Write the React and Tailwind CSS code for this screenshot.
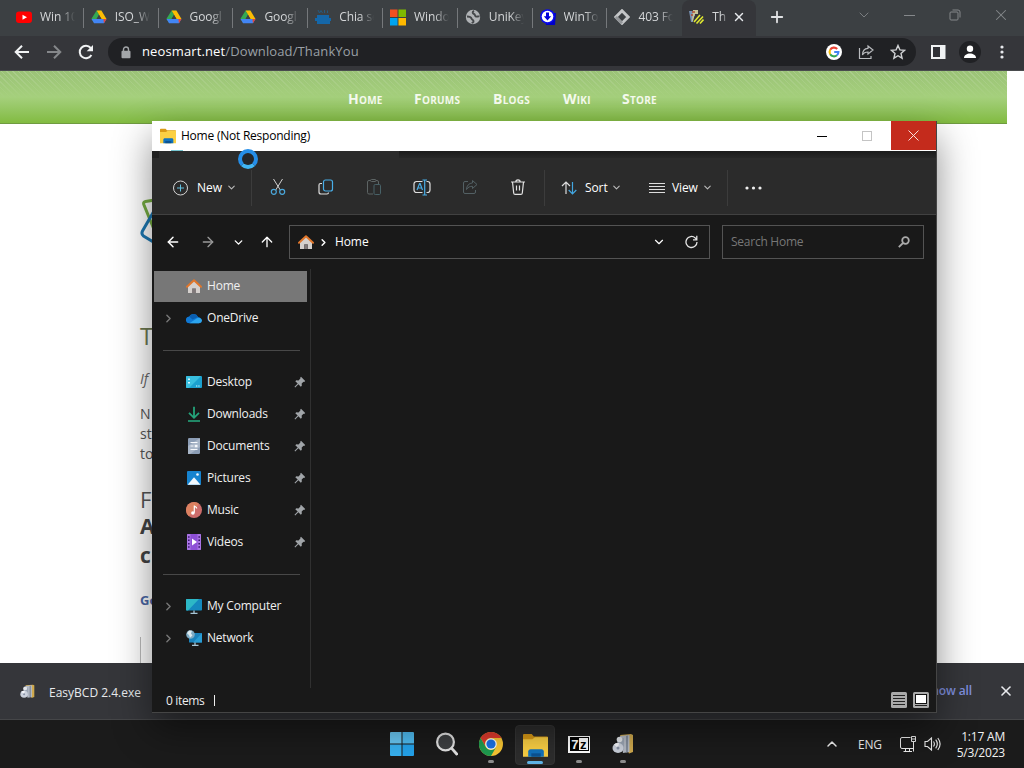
import { ArrowLeft, ArrowRight, ArrowUp, ChevronDown, ChevronRight, ChevronUp, Plus, X } from 'lucide-react'

function DriveIcon() {
  return (
    <svg width="16" height="16" viewBox="0 0 16 16">
      <path d="M5.6 1.5h4.8L8 5.7z" fill="#188038" />
      <path d="M5.6 1.5 8 5.7 3.2 14 .5 9.8z" fill="#34a853" />
      <path d="M5.6 1.5h4.8l5.1 8.5h-5z" fill="#fbbc04" />
      <path d="M.5 10h15l-2.6 4.3H3.1z" fill="#4285f4" />
      <path d="M12.5 10h3l-2.6 4.3z" fill="#ea4335" />
      <path d="M8 6 5.6 10h4.8z" fill="#3c4043" />
    </svg>
  )
}

function YoutubeIcon() {
  return (
    <svg width="16" height="16" viewBox="0 0 16 16">
      <rect y="2.5" width="16" height="11.5" rx="3" fill="#f00" />
      <path d="M6.5 5.8v5L11 8.3z" fill="#fff" />
    </svg>
  )
}

function BlueSiteIcon() {
  return (
    <svg width="16" height="16" viewBox="0 0 16 16">
      <path d="M3 1 4.5 4 6 1.500l1.500 2.500M9.5 1v3M12.500 1.500v2.500" stroke="#255b80" strokeWidth="1" fill="none" />
      <path d="M2 6h12v3h2v3h-1v3H2v-3H0V9h2z" fill="#1567a8" />
    </svg>
  )
}

function MicrosoftIcon() {
  return (
    <svg width="17" height="17" viewBox="0 0 17 17">
      <path d="M0 0h8v8H0z" fill="#f25022" />
      <path d="M9 0h8v8H9z" fill="#7fba00" />
      <path d="M0 9h8v8H0z" fill="#00a4ef" />
      <path d="M9 9h8v8H9z" fill="#ffb900" />
    </svg>
  )
}

function GlobeIcon() {
  return (
    <svg width="16" height="16" viewBox="0 0 16 16">
      <circle cx="8" cy="8" r="7.2" fill="#b0b3b6" />
      <path d="M2 7.500c2 0 4 .5 4.500 2s1.500 1 2 2.500-1 1.500-1.500 2.200" stroke="#44474a" strokeWidth="1.900" fill="none" />
      <path d="M9 1.800C7 3 7.500 4.500 9 5s.5 2 2 2.500 2-.5 3.500 0" stroke="#44474a" strokeWidth="1.900" fill="none" />
    </svg>
  )
}

function DownloadSiteIcon() {
  return (
    <svg width="16" height="16" viewBox="0 0 16 16">
      <path d="M4 4h12l-1 12H6z" fill="#0000c8" />
      <circle cx="7.5" cy="7.5" r="7.3" fill="#0a0af0" />
      <circle cx="7.5" cy="7.5" r="5.8" fill="#fff" />
      <path d="M6 3.5h3v3.8h2.2L7.5 11.5 3.8 7.3H6z" fill="#0000d8" />
    </svg>
  )
}

function DiamondIcon() {
  return (
    <svg width="16" height="16" viewBox="0 0 16 16">
      <path d="M8 1.8 14.2 8 8 14.2 1.8 8z" fill="none" stroke="#c4c6c8" strokeWidth="3" />
      <path d="M8 14.2 1.8 8" stroke="#929598" strokeWidth="3" />
    </svg>
  )
}

function EasyTabIcon() {
  return (
    <svg width="16" height="16" viewBox="0 0 16 16">
      <path d="M1 2h6v5H5v6H3z" fill="#7892b4" />
      <path d="M5 1h5v4H7l-2 7H4z" fill="#c6c49a" />
      <path d="m6 13 6-7M8.500 14.500 15 7.500M12 14.500l3.500-4" stroke="#dfe830" strokeWidth="1.600" />
      <path d="M4 3h3M3 6h2" stroke="#b04b30" strokeWidth="1.5" />
    </svg>
  )
}

function GoogleIcon() {
  return (
    <svg width="16" height="16" viewBox="0 0 16 16">
      <circle cx="8" cy="8" r="8" fill="#fff" />
      <g fill="none" strokeWidth="2.1">
        <path d="M11.2 5A4.4 4.4 0 0 0 4.2 5.8" stroke="#ea4335" />
        <path d="M4.2 5.8a4.4 4.4 0 0 0 0 4.4" stroke="#fbbc04" />
        <path d="M4.2 10.2a4.4 4.4 0 0 0 6.7 1.1" stroke="#34a853" />
        <path d="M10.9 11.3A4.4 4.4 0 0 0 12.4 8H8.2" stroke="#4285f4" />
      </g>
    </svg>
  )
}

function FolderIcon({ size }) {
  return (
    <svg width={size} height={size} viewBox="0 0 24 24">
      <path d="M0 2.2C0 1.5.5 1 1.2 1h7.2l2 2.3h12.4c.7 0 1.2.5 1.2 1.2V8H0z" fill="#d99a16" />
      <path d="M0 6h9l2.5-2H24v18.8H0z" fill="#fbd044" />
      <path d="M5 22.8v-5c0-1.4.9-2.3 2.3-2.3h10.4c1.4 0 2.3.9 2.3 2.3v5z" fill="#1173be" />
      <path d="M8 19.5h9v3.3H8z" fill="#0b5393" />
    </svg>
  )
}

function HomeIcon() {
  return (
    <svg width="16" height="16" viewBox="0 0 16 16">
      <path d="M2 7.5 8 2l6 5.5V15H9.8v-4.5H6.2V15H2z" fill="#d5d0cd" />
      <path d="M6.2 10.5h3.6V15H6.2z" fill="#80797a" />
      <path d="M1 8.7 8 2.2l7 6.5" fill="none" stroke="#e0762b" strokeWidth="2" strokeLinejoin="round" strokeLinecap="round" />
    </svg>
  )
}

function OneDriveIcon() {
  return (
    <svg width="16" height="16" viewBox="0 0 16 16">
      <path d="M3.5 13.3a3.4 3.4 0 0 1-.4-6.8A5 5 0 0 1 12 6.9a3.3 3.3 0 0 1 .8 6.4z" fill="#0f78d4" />
      <path d="M3.1 6.5A5 5 0 0 1 12 6.9L6.5 9.6z" fill="#0a5eb0" />
      <path d="M3.5 13.3 11 8.2c2.5-1.5 5 .3 5 2.4 0 1.5-1.3 2.7-3.2 2.7z" fill="#2ba4ee" />
    </svg>
  )
}

function DesktopIcon() {
  return (
    <svg width="16" height="16" viewBox="0 0 16 16">
      <rect y="2" width="16" height="12" rx="1" fill="#1ba0cf" />
      <path d="M0 3a1 1 0 0 1 1-1h14L3 14H1a1 1 0 0 1-1-1z" fill="#38bfdf" />
      <path d="M2 4.5h2v1.5H2zM2 8h2v1.5H2z" fill="#d6f6ff" />
      <path d="M10 12h1.3M12.3 12h1.3" stroke="#d6f6ff" />
    </svg>
  )
}

function DownloadsIcon() {
  return (
    <svg width="16" height="16" viewBox="0 0 16 16">
      <path d="M8 .8v10.5M3 6.8l5 5 5-5" fill="none" stroke="#24a37a" strokeWidth="1.8" />
      <path d="M2 15h12" stroke="#24a37a" strokeWidth="1.6" />
    </svg>
  )
}

function DocumentsIcon() {
  return (
    <svg width="16" height="16" viewBox="0 0 16 16">
      <rect x="2" width="12" height="16" rx="1.2" fill="#8c9db5" />
      <path d="M2 8 14 0v9L4 16H2z" fill="#a8b5c7" />
      <path d="M4.5 4.5h7M4.5 11.5h7M4.5 8h3" stroke="#f6f8fc" strokeWidth="1.2" />
      <path d="M8.7 6.8h2.8v2.5H8.7z" fill="#f6f8fc" />
    </svg>
  )
}

function PicturesIcon() {
  return (
    <svg width="16" height="16" viewBox="0 0 16 16">
      <rect x="1" y="1" width="14" height="14" rx="1" fill="#1683cf" />
      <path d="m1.6 14.8 6-7a.6.6 0 0 1 .9 0l6 7z" fill="#f2f8fc" />
      <circle cx="11.5" cy="4.5" r="1.3" fill="#f2f8fc" />
    </svg>
  )
}

function MusicIcon() {
  return (
    <svg width="16" height="16" viewBox="0 0 16 16">
      <circle cx="8" cy="8" r="8" fill="#cc6c6b" />
      <path d="M.5 5.5A8 8 0 0 1 13 1.8L3 14.2a8 8 0 0 1-2.5-8.7z" fill="#dc8160" />
      <path d="M8.3 10.8V3.6c.4 1.4 2.4 1.2 2.4 3" fill="none" stroke="#fff" strokeWidth="1.2" />
      <circle cx="6.9" cy="11" r="1.8" fill="#fff" />
    </svg>
  )
}

function VideosIcon() {
  return (
    <svg width="16" height="16" viewBox="0 0 16 16">
      <rect x="1" width="14" height="16" rx="1" fill="#8d4fd6" />
      <path d="M1 1a1 1 0 0 1 1-1h2.5v16H2a1 1 0 0 1-1-1zM11.5 0H14a1 1 0 0 1 1 1v14a1 1 0 0 1-1 1h-2.5z" fill="#a974e4" />
      <path d="M2 3h1.6M2 6.3h1.6M2 9.7h1.6M2 13h1.6M12.4 3H14M12.4 6.3H14M12.4 9.7H14M12.4 13H14" stroke="#3d1770" strokeWidth="1.6" />
      <path d="M6 4.5v7l5-3.5z" fill="#fff" />
    </svg>
  )
}

function ComputerIcon() {
  return (
    <svg width="16" height="16" viewBox="0 0 16 16">
      <rect y="1" width="16" height="11.5" rx=".8" fill="#1589be" />
      <path d="M0 1.8A.8.8 0 0 1 .8 1H13L2 12.5H.8a.8.8 0 0 1-.8-.8z" fill="#2db8c6" />
      <path d="M8 12.5v2.5M4.5 15.3h7" stroke="#a6c5d6" strokeWidth="1.3" />
    </svg>
  )
}

function NetworkIcon() {
  return (
    <svg width="16" height="16" viewBox="0 0 16 16">
      <rect x="3" y="3" width="13" height="9.5" rx=".6" fill="#1b82bb" />
      <path d="M16 3 7 12.5h8.4a.6.6 0 0 0 .6-.6z" fill="#2a9dd4" />
      <path d="M9 12.5V15M6 15.3h6.5" stroke="#a6c5d6" strokeWidth="1.3" />
      <circle cx="4.5" cy="4.5" r="4.3" fill="#7eabc4" />
      <path d="M1 3.2 3 .6l3 .2L5 3.4l1.4 2L4 7.8 3 5z" fill="#dceaf0" />
    </svg>
  )
}

function PinIcon() {
  return (
    <svg width="12" height="12" viewBox="0 0 12 12">
      <path d="m7 .8 4.2 4.2-1 .9-.7-.1-1.8 1.8.1 2.1-1 1L4.4 8.3 1.2 11.5l-.7-.7 3.2-3.2-2.4-2.4 1-1 2.2.2 1.9-1.9-.2-.7z" fill="#a1a5a9" />
    </svg>
  )
}

// installer icon: box with a disc leaning on it
function SetupIcon({ size }) {
  return (
    <svg width={size} height={size} viewBox="0 0 22 22">
      <path d="M8 2 19 1l2 1v17l-4 1.500z" fill="#d0aa4e" />
      <path d="M8 3 17.500 2v17L11 20z" fill="#b4bac4" />
      <path d="m14 3 2-.5V19l-2 .5z" fill="#858f9e" />
      <path d="M5 7 12 5v12l-5 1z" fill="#9ba5b4" />
      <ellipse cx="6" cy="15" rx="5.500" ry="5" fill="#ccd2dd" />
      <path d="M6 15 2 11.500a5.500 5.500 0 0 1 5-1.500z" fill="#f5f7fb" />
      <circle cx="6" cy="15" r="1.500" fill="#8892a6" />
      <circle cx="7.500" cy="6.500" r="2.800" fill="#e3e6ea" />
    </svg>
  )
}

function ChromeIcon() {
  return (
    <svg width="24" height="24" viewBox="0 0 24 24">
      <circle cx="12" cy="12" r="12" fill="#fcc934" />
      <path d="M1.6 6A12 12 0 0 1 22.4 6H12a6 6 0 0 0-5.2 9z" fill="#e33b2e" />
      <path d="M1.6 6A12 12 0 0 0 12 24l5.2-9a6 6 0 0 1-10.4 0z" fill="#1f9d51" />
      <circle cx="12" cy="12" r="5.8" fill="#fff" />
      <circle cx="12" cy="12" r="4.6" fill="#1a73e8" />
    </svg>
  )
}

const tabs = [
  { title: 'Win 10', icon: <YoutubeIcon /> },
  { title: 'ISO_W', icon: <DriveIcon /> },
  { title: 'Googl', icon: <DriveIcon /> },
  { title: 'Googl', icon: <DriveIcon /> },
  { title: 'Chia sẻ', icon: <BlueSiteIcon /> },
  { title: 'Windo', icon: <MicrosoftIcon /> },
  { title: 'UniKey', icon: <GlobeIcon /> },
  { title: 'WinTo', icon: <DownloadSiteIcon /> },
  { title: '403 Fo', icon: <DiamondIcon /> },
]

const sidebar = [
  { name: 'Home', icon: <HomeIcon />, active: true },
  { name: 'OneDrive', icon: <OneDriveIcon />, expandable: true },
  { divider: true },
  { name: 'Desktop', icon: <DesktopIcon />, pinned: true },
  { name: 'Downloads', icon: <DownloadsIcon />, pinned: true },
  { name: 'Documents', icon: <DocumentsIcon />, pinned: true },
  { name: 'Pictures', icon: <PicturesIcon />, pinned: true },
  { name: 'Music', icon: <MusicIcon />, pinned: true },
  { name: 'Videos', icon: <VideosIcon />, pinned: true },
  { divider: true },
  { name: 'My Computer', icon: <ComputerIcon />, expandable: true },
  { name: 'Network', icon: <NetworkIcon />, expandable: true },
]

function TabStrip() {
  return (
    <div className="h-[36px] bg-[#3c4043] flex pl-[9px] text-[#d4d6d8] text-[12px]">
      {tabs.map((tab, i) => (
        <div key={i} className="w-[74.8px] shrink-0 h-[34px] flex items-center relative pl-[7px]">
          <div className="w-4 h-4 flex items-center justify-center shrink-0">{tab.icon}</div>
          <div className="ml-[8px] w-[38px] overflow-hidden whitespace-nowrap tracking-[-0.1px] [mask-image:linear-gradient(to_right,#000_55%,transparent_92%)]">
            {tab.title}
          </div>
          {i < 8 && <div className="absolute right-0 top-[8px] w-px h-[20px] bg-[#75787b]" />}
        </div>
      ))}
      <div className="w-[74px] h-[36px] bg-[#35363a] rounded-t-lg flex items-center pl-[6px] pb-[2px]">
        <EasyTabIcon />
        <div className="ml-[8px] w-[16px] overflow-hidden whitespace-nowrap [mask-image:linear-gradient(to_right,#000_60%,transparent)]">Th</div>
        <X className="ml-[4px] text-[#e8eaed]" size={14} strokeWidth={2.4} />
      </div>
      <Plus className="mt-[8px] ml-[12px] text-[#e0e2e4]" size={18} strokeWidth={2.4} />
      <div className="ml-auto flex items-center h-[29px] pr-[14px] gap-[30px] text-[#85888b]">
        <ChevronDown size={16} strokeWidth={1.3} />
        <svg width="14" height="14" viewBox="0 0 14 14"><path d="M2 7.5h11" stroke="currentColor" /></svg>
        <svg className="ml-[3px]" width="12" height="12" viewBox="0 0 12 12" fill="none" stroke="currentColor">
          <rect x="1" y="3" width="8" height="8" rx="1" />
          <path d="M3.5 1H9a2 2 0 0 1 2 2v5.5" />
        </svg>
        <X className="ml-[1px]" size={18} strokeWidth={1.4} />
      </div>
    </div>
  )
}

function AddressBar() {
  return (
    <div className="h-[35px] bg-[#35363a] border-b border-[#4a4c4e] flex items-center pl-[14px] pb-[2px] text-[#e8eaed]">
      <svg width="16" height="16" viewBox="0 0 16 16" fill="none" stroke="#f1f3f4" strokeWidth="2"><path d="M15 8H2M8 1.7 1.7 8 8 14.3" /></svg>
      <svg className="ml-4" width="16" height="16" viewBox="0 0 16 16" fill="none" stroke="#85878a" strokeWidth="2"><path d="M1 8h13M8 1.7 14.3 8 8 14.3" /></svg>
      <svg className="ml-4" width="16" height="16" viewBox="0 0 16 16">
        <path d="M13.4 11A6.2 6.2 0 1 1 12.7 4" fill="none" stroke="#f1f3f4" strokeWidth="2" />
        <path d="M15 1v6.3H8.7z" fill="#f1f3f4" />
      </svg>
      <div className="ml-[14px] w-[808px] h-[28px] rounded-full bg-[#202124] flex items-center pl-[13px] pr-[10px] text-[13px]">
        <svg width="10" height="13" viewBox="0 0 10 13">
          <path d="M2.5 6V3.5a2.5 2.5 0 0 1 5 0V6" fill="none" stroke="#a3a6a9" strokeWidth="1.4" />
          <rect x=".5" y="4.8" width="9" height="7.5" rx="1" fill="#a3a6a9" />
        </svg>
        <span className="ml-[11px] whitespace-nowrap text-[#9aa0a6] tracking-[0.12px]"><span className="text-white font-medium">neosmart.net</span>/Download/ThankYou</span>
        <div className="ml-auto flex items-center gap-4">
          <GoogleIcon />
          <svg width="16" height="16" viewBox="0 0 16 16" fill="none" stroke="#b9bbbe" strokeWidth="1.2">
            <path d="M1.5 4v10.500H13V12" />
            <path d="M10 2 15 6l-5 4V8C7.5 8 5.500 9 4.500 11c0-4 2-6.500 5.500-6.700z" />
          </svg>
          <svg width="16" height="16" viewBox="0 0 16 16" fill="none" stroke="#d0d2d4" strokeWidth="1.4">
            <path d="m8 1.5 1.9 4.400 4.700.4-3.600 3.200 1.100 4.700L8 11.700l-4.100 2.500L5 9.500 1.400 6.300l4.700-.4z" />
          </svg>
        </div>
      </div>
      <svg className="ml-[15px]" width="15" height="14" viewBox="0 0 15 14"><path d="M0 0h14.500v14H0z" fill="#f1f3f4" /><path d="M2 2h7v10H2z" fill="#303136" /></svg>
      <svg className="ml-[12px]" width="24" height="24" viewBox="0 0 24 24">
        <circle cx="12" cy="12" r="11" fill="#202124" />
        <circle cx="12" cy="8.8" r="3.2" fill="#fff" />
        <path d="M6 18c0-3 3-4.500 6-4.500s6 1.500 6 4.500z" fill="#fff" />
      </svg>
      <svg className="ml-[18px]" width="4" height="14" viewBox="0 0 4 14" fill="#e8eaed"><circle cx="2" cy="2" r="1.6" /><circle cx="2" cy="7" r="1.6" /><circle cx="2" cy="12" r="1.6" /></svg>
    </div>
  )
}

function WebPage() {
  return (
    <div className="h-[592px] bg-white relative overflow-hidden">
      <div className="w-[1007px] h-[53px] border-b border-[#6f9b40] bg-linear-to-b from-[#9bc377] via-[#a5d07c] to-[#82bb40] relative">
        <div className="absolute inset-x-0 top-0 h-[28px] bg-[repeating-linear-gradient(45deg,rgba(255,255,255,0.16)_0px,rgba(255,255,255,0.16)_1px,transparent_1px,transparent_4px)] [mask-image:linear-gradient(to_bottom,#000,transparent)]" />
        <nav className="relative flex gap-[31px] pl-[348px] pt-[18px] text-[14px] leading-[20px] font-bold text-[#f6fbef] [font-variant:small-caps] tracking-[0.25px]">
          <a className="w-[35px]">Home</a>
          <a className="w-[48px]">Forums</a>
          <a className="w-[39px]">Blogs</a>
          <a className="w-[28px]">Wiki</a>
          <a className="w-[38px]">Store</a>
        </nav>
      </div>
      <div className="pl-[140px] text-[#555] text-[14px] leading-[20px]">
        <svg className="mt-[74px] block" width="24" height="50" viewBox="0 0 24 50" fill="none" strokeWidth="3">
          <path d="M24 21 15 2 5.5 3.500q-2.500.7-1.700 3L20 46" stroke="#76ad43" />
          <path d="M14 13 2.500 33q-1.500 3 1 5L20 48" stroke="#1c78b3" />
        </svg>
        <h1 className="mt-[70px] text-[24px] leading-[36px] text-[#6c7850]">T</h1>
        <p className="mt-[15px] italic text-[#666]">If</p>
        <p className="mt-[15px]">N<br />st<br />to</p>
        <h2 className="mt-[20px] text-[22px] leading-[30px]">F</h2>
        <div className="-mt-[2px] text-[21px] leading-[29px] font-bold text-[#444]">A<br />c</div>
        <p className="mt-[20px] font-bold text-[#4b67a6] text-[13px]">Go</p>
        <div className="mt-[27px] w-10 h-[40px] border-l border-[#bbb]" />
      </div>
    </div>
  )
}

function DownloadShelf() {
  return (
    <div className="h-[57px] bg-[#35363a] border-b border-[#454648] flex items-center pl-[20px] text-[#e8eaed]">
      <SetupIcon size={15} />
      <span className="ml-[14px] mt-[3px] text-[12px] whitespace-nowrap w-[120px]">EasyBCD 2.4.exe</span>
      <span className="ml-auto text-[12px] font-semibold text-[#7f8fdf] tracking-[-0.1px]">Show all</span>
      <X className="ml-[26px] mr-[10px]" size={16} strokeWidth={2.4} />
    </div>
  )
}

function Ribbon() {
  return (
    <div className="h-[64px] bg-[#2b2b2b] border-b border-[#414141]">
      <div className="flex justify-between h-[7px]">
        <div className="w-[7px] bg-[#202020]" />
        <div className="w-[537px] bg-linear-to-b from-[#1b1b1b] to-[#272727]" />
      </div>
      <div className="h-[59px] flex items-center text-white text-[12px] font-medium [&_svg]:shrink-0">
        <svg className="ml-[20px]" width="17" height="16" viewBox="0 0 17 16" fill="none" stroke="#d5d5d5">
          <circle cx="8.500" cy="8" r="7" />
          <path d="M8.5 4.500v7M5 8h7" stroke="#63c0de" />
        </svg>
        <span className="ml-[8px] w-[27px]">New</span>
        <ChevronDown className="ml-[2px] text-[#bbb]" size={11} strokeWidth={2.4} />
        <div className="ml-[14px] h-9 w-px bg-[#3c3c3c]" />
        <div className="ml-[2px] flex">
          <div className="w-12 flex justify-center">
            <svg width="16" height="16" viewBox="0 0 16 16" fill="none">
              <path d="m3.5 0 6.800 11M12.500 0 5.700 11" stroke="#d2d2d2" />
              <circle cx="3.8" cy="12.8" r="2.5" stroke="#4ba8dc" strokeWidth="1.2" />
              <circle cx="12.2" cy="12.8" r="2.5" stroke="#4ba8dc" strokeWidth="1.2" />
            </svg>
          </div>
          <div className="w-12 flex justify-center">
            <svg width="16" height="16" viewBox="0 0 16 16" fill="none">
              <path d="M4 4.500H2.500A1.500 1.500 0 0 0 1 6v7a2 2 0 0 0 2 2h6a1.500 1.500 0 0 0 1.500-1.500" stroke="#ddd" strokeWidth="1.2" />
              <rect x="5.5" y="1" width="9" height="11" rx="2" stroke="#48aee8" strokeWidth="1.2" />
            </svg>
          </div>
          <div className="w-12 flex justify-center">
            <svg width="16" height="16" viewBox="0 0 16 16" fill="none" stroke="#5d6464">
              <path d="M7 15H3a1.500 1.500 0 0 1-1.500-1.500V3A1.500 1.500 0 0 1 3 1.500h1.500M10 1.500h1A1.500 1.500 0 0 1 12.500 3v2" />
              <rect x="4.5" y=".5" width="5.5" height="2" rx="1" />
              <rect x="8" y="5.500" width="6.5" height="10" rx="1.2" stroke="#486268" />
            </svg>
          </div>
          <div className="w-12 flex justify-center">
            <svg width="18" height="17" viewBox="0 0 18 17" fill="none">
              <path d="M9.500 2.500H3.500A2.500 2.500 0 0 0 1 5v6a2.500 2.500 0 0 0 2.500 2.500h6M13.500 2.500h1A2.500 2.500 0 0 1 17 5v6a2.500 2.500 0 0 1-2.500 2.500h-1" stroke="#dedede" strokeWidth="1.2" />
              <path d="m4 11 2.600-6.500h.5L9.500 11M5 9h3.700M11.700 1v15M9.500 1H14M9.500 16H14" stroke="#4aaee6" strokeWidth="1.2" />
            </svg>
          </div>
          <div className="w-12 flex justify-center">
            <svg width="16" height="16" viewBox="0 0 16 16" fill="none" stroke="#536064">
              <path d="M6 2.500H3A1.500 1.500 0 0 0 1.500 4v9A1.500 1.500 0 0 0 3 14.500h9a1.500 1.500 0 0 0 1.500-1.500v-2" />
              <path d="M10.500 1.500 15 5.500l-4.500 4V7.300C8 7.300 6 8 4.500 10.500c.2-4 2.500-6.300 6-6.600z" />
            </svg>
          </div>
          <div className="w-12 flex justify-center">
            <svg width="16" height="16" viewBox="0 0 16 16" fill="none" stroke="#e2e2e2" strokeWidth="1.2">
              <path d="M1 3h14M5.800 3a2.200 2.200 0 0 1 4.400 0M2.500 3l1.200 11a1.500 1.500 0 0 0 1.500 1.400h5.600a1.500 1.500 0 0 0 1.500-1.400L13.500 3M6.500 6.500v5M9.500 6.500v5" />
            </svg>
          </div>
        </div>
        <div className="ml-[2px] h-9 w-px bg-[#3c3c3c]" />
        <svg className="ml-[16px]" width="16" height="14" viewBox="0 0 16 14" fill="none" strokeWidth="1.2">
          <path d="M5 13V1M1 5l4-4 4 4" stroke="#ddd" />
          <path d="M11.500 1v12M7.700 9l3.800 4 3.800-4" stroke="#42a6e0" />
        </svg>
        <span className="ml-[8px] w-[24px] tracking-[-0.1px]">Sort</span>
        <ChevronDown className="ml-[2px] text-[#bbb]" size={11} strokeWidth={2.4} />
        <svg className="ml-[27px]" width="16" height="12" viewBox="0 0 16 12" stroke="#ddd"><path d="M0 1.500h16M0 4.500h16M0 7.500h16M0 10.500h16" /></svg>
        <span className="ml-[7px] w-[29px] tracking-[-0.1px]">View</span>
        <ChevronDown className="ml-[1px] text-[#bbb]" size={11} strokeWidth={2.4} />
        <div className="ml-[14px] h-9 w-px bg-[#3c3c3c]" />
        <svg className="ml-[17px]" width="17" height="4" viewBox="0 0 17 4" fill="#eee"><circle cx="2" cy="2" r="1.6" /><circle cx="8.5" cy="2" r="1.6" /><circle cx="15" cy="2" r="1.6" /></svg>
      </div>
    </div>
  )
}

function Sidebar() {
  return (
    <div className="w-[159px] h-[419px] pt-[1px] border-r border-[#303030] text-[12px] text-[#f0f0f0] tracking-[-0.2px]">
      {sidebar.map((item, i) =>
        item.divider ? (
          <div key={i} className="h-8 flex items-center pl-[11px]"><div className="w-[137px] h-px bg-[#484848]" /></div>
        ) : (
          <div key={i} className="h-8 pl-[2px] flex items-center">
            <div className={item.active ? 'w-[153px] h-[31px] flex items-center bg-[#777]' : 'w-[153px] h-[31px] flex items-center'}>
              <div className="w-[32px] pl-[8px]">
                {item.expandable && <ChevronRight className="text-[#777]" size={13} strokeWidth={2.6} />}
              </div>
              <div className="w-4 h-4">{item.icon}</div>
              <span className="ml-[5px] whitespace-nowrap">{item.name}</span>
              {item.pinned && <div className="ml-auto mr-[1px]"><PinIcon /></div>}
            </div>
          </div>
        )
      )}
    </div>
  )
}

function ExplorerWindow() {
  return (
    <div className="absolute left-[152px] top-[121px] w-[785px] h-[592px] flex flex-col bg-[#191919] border-r border-b border-[#454545] [box-shadow:0_16px_36px_rgba(0,0,0,0.45)]">
      <div className="h-[30px] bg-white flex items-center pl-[8px] text-black text-[12px]">
        <FolderIcon size={16} />
        <span className="ml-[5px] whitespace-nowrap tracking-[-0.23px]">Home (Not Responding)</span>
        <div className="ml-auto h-[30px] flex">
          <div className="w-[46px] flex items-center justify-center"><div className="mr-[3px] w-[10px] h-px bg-black" /></div>
          <div className="w-[45px] flex items-center justify-center"><div className="mr-[3px] w-[10px] h-[10px] border border-[#c4c4c4]" /></div>
          <div className="w-[45px] h-[29px] bg-[#c42b1c] flex items-center justify-center">
            <svg className="mr-[1px]" width="11" height="11" viewBox="0 0 11 11" stroke="#f8dfdc"><path d="m.5.5 10 10M10.500.5l-10 10" /></svg>
          </div>
        </div>
      </div>
      <Ribbon />
      <div className="h-[54px] flex items-center text-white [&_svg]:shrink-0">
        <ArrowLeft className="ml-[13px]" size={16} strokeWidth={2.2} />
        <ArrowRight className="ml-[19px] text-[#999]" size={16} strokeWidth={2} />
        <ChevronDown className="ml-[16px]" size={13} strokeWidth={2.5} />
        <ArrowUp className="ml-[14px]" size={16} strokeWidth={2} />
        <div className="ml-[14px] w-[421px] h-[34px] border border-[#535353] flex items-center pl-[8px] text-[12px]">
          <HomeIcon />
          <ChevronRight className="ml-[4px]" size={11} strokeWidth={3.2} />
          <span className="ml-[6px] font-medium tracking-[-0.1px]">Home</span>
          <ChevronDown className="ml-auto" size={14} strokeWidth={2} />
          <svg className="ml-[19px] mr-[11px]" width="13" height="14" viewBox="0 0 13 14" fill="none" stroke="#e4e4e4" strokeWidth="1.3"><path d="M12 7a5.500 5.500 0 1 1-1.800-4.100L11.700 4.500M11.800.8v4H8" /></svg>
        </div>
        <div className="ml-[12px] w-[202px] h-[34px] border border-[#535353] flex items-center pl-[8px] pr-[13px] text-[12px] text-[#777] tracking-[-0.25px]">
          <span>Search Home</span>
          <svg className="ml-auto" width="12" height="12" viewBox="0 0 12 12" fill="none" stroke="#aaa" strokeWidth="1.8"><circle cx="7.5" cy="4.500" r="3.3" /><path d="M5 7 .8 11.200" /></svg>
        </div>
      </div>
      <div className="h-[419px]"><Sidebar /></div>
      <div className="h-[24px] flex items-center pl-[14px] pr-[7px] text-[12px] text-[#eee]">
        <span className="w-[40px] pt-[2px] whitespace-nowrap tracking-[-0.35px]">0 items</span>
        <div className="ml-[8px] w-px h-[11px] bg-[#eee]" />
        <svg className="ml-auto" width="38" height="16" viewBox="0 0 38 16">
          <rect width="16" height="16" rx="1.5" fill="#aaa" />
          <path d="M2 3.500h12M2 6.500h12M2 9.500h12M2 12.500h12" stroke="#222" />
          <rect x="22" width="16" height="16" rx="1.5" fill="#aaa" />
          <rect x="24.5" y="2.5" width="11" height="9" fill="#fff" stroke="#111" />
          <path d="M24 13.500h12" stroke="#222" />
        </svg>
      </div>
      {/* leftover of the tab underneath the ghost title bar */}
      <div className="absolute left-[19px] top-[29px] w-[12px] h-px bg-[#76c4cf]" />
    </div>
  )
}

function Taskbar() {
  const running = 'absolute bottom-[5px] w-[6px] h-[3px] rounded-full bg-[#8f8f8f]'
  return (
    <div className="h-[48px] bg-[#1b1b1b] relative flex items-center text-[#f2f2f2]">
      <div className="ml-[380px] flex h-12">
        <div className="w-11 flex items-center justify-center">
          <svg width="24" height="24" viewBox="0 0 24 24">
            <path d="M1 0h10.500v11.500H0V1a1 1 0 0 1 1-1z" fill="#6bcaf6" />
            <path d="M12.500 0H23a1 1 0 0 1 1 1v10.500H12.500z" fill="#50bff5" />
            <path d="M0 12.500h11.500V24H1a1 1 0 0 1-1-1z" fill="#38b3f3" />
            <path d="M12.500 12.500H24V23a1 1 0 0 1-1 1H12.500z" fill="#24a5ef" />
          </svg>
        </div>
        <div className="w-[45px] flex items-center justify-center">
          <svg width="22" height="24" viewBox="0 0 22 24" fill="none">
            <circle cx="9.5" cy="10" r="8.4" fill="#3e4042" stroke="#e4e4e4" strokeWidth="2.2" />
            <path d="m15.700 16.300 5 5.700" stroke="#e4e4e4" strokeWidth="2.8" strokeLinecap="round" />
          </svg>
        </div>
        <div className="w-11 flex items-center justify-center relative"><ChromeIcon /><span className={running} /></div>
        <div className="w-11 flex items-center justify-center">
          <div className="relative mt-[2px] w-10 h-10 rounded bg-[#2d2d2d] border border-[#353535] flex items-center justify-center">
            <FolderIcon size={25} />
            <span className="absolute bottom-0 w-4 h-[3px] rounded-full bg-[#60b5e8]" />
          </div>
        </div>
        <div className="w-11 flex items-center justify-center relative">
          <div className="w-[22px] h-[17px] bg-white p-[1.5px]">
            <div className="w-full h-full border border-black flex font-bold leading-[13px] text-[13px] font-['Liberation_Sans',sans-serif]">
              <span className="w-[9px] bg-black text-white text-center">7</span>
              <span className="w-[9px] text-black text-center">z</span>
            </div>
          </div>
          <span className={running} />
        </div>
        <div className="w-[43px] flex items-center justify-center relative"><SetupIcon size={22} /><span className={running} /></div>
      </div>
      <div className="ml-auto pr-[19px] flex items-center">
        <ChevronUp size={16} strokeWidth={2.2} />
        <span className="ml-[18px] mt-[2px] text-[12px] w-[25px] tracking-[-0.2px]">ENG</span>
        <svg className="ml-[17px]" width="16" height="16" viewBox="0 0 16 16" fill="none" stroke="#eee">
          <path d="M10.500 1.500H2A1.500 1.500 0 0 0 .5 3v8A1.500 1.500 0 0 0 2 12.500h11.500M5.500 12.500v3M9.500 12.500v3M3.500 15.500h8.500M11.500.5h4v5h-4zM13.500 5.500v10M11.500 3h4" />
        </svg>
        <svg className="ml-[8px]" width="17" height="16" viewBox="0 0 17 16" fill="none" stroke="#eee" strokeWidth="1.1">
          <path d="M1 5.500h2.500L7.500 2v12l-4-3.500H1zM9.500 5.500q1.800 2.500 0 5M11.700 3.700q3.200 4.300 0 8.600M13.800 2q4.600 6 0 12" />
        </svg>
        <div className="ml-[14px] w-[50px] pt-px text-[12px] leading-[16px] text-right whitespace-nowrap tracking-[-0.2px] flex flex-col items-end">
          <span>1:17 AM</span>
          <span>5/3/2023</span>
        </div>
      </div>
    </div>
  )
}

export default function App() {
  return (
    <div className="relative w-[1024px] h-[768px] overflow-hidden flex flex-col bg-[#1b1b1b] font-['Open_Sans','Noto_Sans',sans-serif]">
      <TabStrip />
      <AddressBar />
      <WebPage />
      <DownloadShelf />
      <Taskbar />
      <ExplorerWindow />
      {/* busy cursor */}
      <div className="absolute left-[238px] top-[149px] w-5 h-5 rounded-full border-[4.5px] border-[#258ee8] border-b-[#41b6f4] bg-[#24272b]" />
    </div>
  )
}
